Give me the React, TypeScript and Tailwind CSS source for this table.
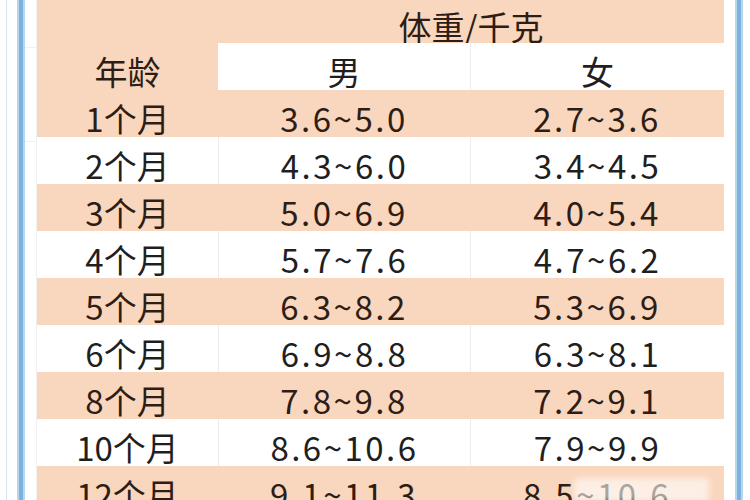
import React from "react";

const rows: [string, string, string][] = [
  ["1个月", "3.6~5.0", "2.7~3.6"],
  ["2个月", "4.3~6.0", "3.4~4.5"],
  ["3个月", "5.0~6.9", "4.0~5.4"],
  ["4个月", "5.7~7.6", "4.7~6.2"],
  ["5个月", "6.3~8.2", "5.3~6.9"],
  ["6个月", "6.9~8.8", "6.3~8.1"],
  ["8个月", "7.8~9.8", "7.2~9.1"],
  ["10个月", "8.6~10.6", "7.9~9.9"],
  ["12个月", "9.1~11.3", "8.5~10.6"],
];

function Cell({
  children,
  peach,
  divider,
  num,
}: {
  children?: React.ReactNode;
  peach: boolean;
  divider?: boolean;
  num?: boolean;
}) {
  return (
    <div
      className={
        "flex h-[47px] items-center justify-center pt-[10px] " +
        (num ? "tracking-[2.5px] " : "") +
        (peach
          ? "bg-[#f9d6be] text-[#2e1d14]"
          : "bg-white text-[#1f1f1f]" + (divider ? " border-l border-[#ececec]" : ""))
      }
    >
      {children}
    </div>
  );
}

export default function App() {
  return (
    <div
      className="relative flex h-[500px] w-[750px] overflow-hidden bg-white text-[33px] leading-none"
      style={{ fontFamily: '"Noto Sans CJK SC", "Noto Sans", sans-serif' }}
    >
      {/* left spreadsheet edge */}
      <div className="flex w-[37px] shrink-0">
        <div className="w-[6px]" />
        <div className="w-[1px] bg-[#d3e6f5]" />
        <div className="w-[10px]" />
        <div className="w-[2px] bg-[#b7d6ef]" />
        <div className="w-[4px] bg-[#7db2df]" />
        <div className="w-[2px] bg-[#b7d6ef]" />
        <div className="flex flex-1 flex-col border-r border-[#eef0f2]">
          <div className="h-[48px] border-b border-[#eef0f2]" />
          <div className="h-[94px] border-b border-[#eef0f2]" />
        </div>
      </div>

      {/* table */}
      <div className="flex w-[687px] shrink-0 flex-col">
        <div className="h-[5px] bg-[#fbe6d8]" />
        <div className="grid grid-cols-[181px_506px]">
          <div className="h-[43px] bg-[#f9d6be]" />
          <div className="flex h-[43px] items-center justify-center bg-[#f9d6be] pt-[10px] text-[#2e1d14]">
            体重/千克
          </div>
        </div>
        <div className="grid grid-cols-[181px_252px_254px]">
          <Cell peach>年龄</Cell>
          <Cell peach={false}>男</Cell>
          <Cell peach={false} divider>
            女
          </Cell>
          {rows.map(([age, m, f], i) => {
            const peach = i % 2 === 0;
            return (
              <React.Fragment key={age}>
                <Cell peach={peach}>{age}</Cell>
                <Cell peach={peach} divider num>
                  {m}
                </Cell>
                <Cell peach={peach} divider num>
                  {f}
                </Cell>
              </React.Fragment>
            );
          })}
        </div>
      </div>

      {/* right spreadsheet edge */}
      <div className="flex flex-1">
        <div className="w-[11px]" />
        <div className="w-[2px] bg-[#b7d6ef]" />
        <div className="w-[4px] bg-[#7db2df]" />
        <div className="w-[2px] bg-[#b7d6ef]" />
      </div>

      {/* watermark blur */}
      <div className="absolute left-[574px] top-[478px] h-[24px] w-[135px] rounded-sm bg-white/60 blur-[3px]" />
    </div>
  );
}
